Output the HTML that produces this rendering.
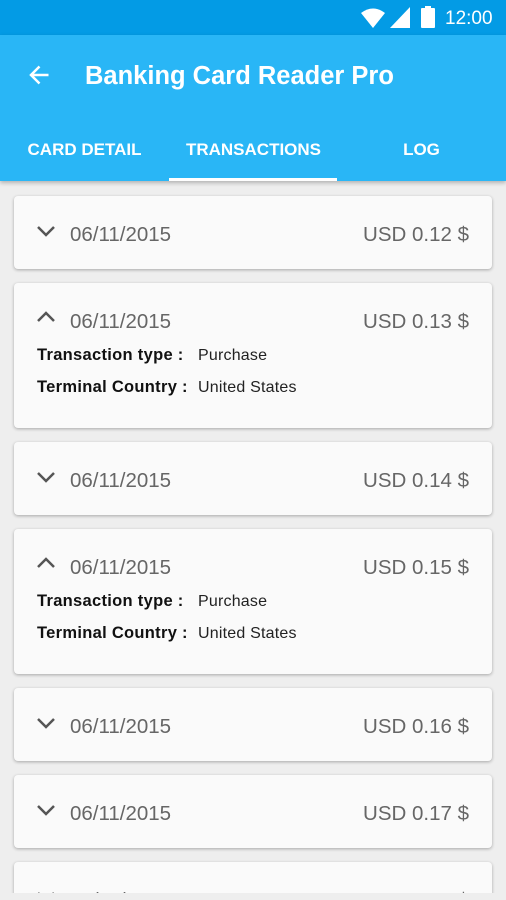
<!DOCTYPE html>
<html><head><style>
*{margin:0;padding:0;box-sizing:border-box}
body{width:506px;height:900px;background:#eeeeee;font-family:"Liberation Sans",sans-serif;position:relative;overflow:hidden}
.sb{position:absolute;top:0;left:0;width:506px;height:35px;background:#039be5}
.ab{position:absolute;top:35px;left:0;width:506px;height:146px;background:#29b6f6;box-shadow:0 2px 4px rgba(0,0,0,.25)}
.t{position:absolute;color:#fff}
.tab{position:absolute;top:138px;font-size:17px;font-weight:bold;color:#fff;text-align:center;width:169px}
.ind{position:absolute;left:169px;top:178px;width:168px;height:3px;background:#fff}
.clip{position:absolute;top:181px;left:0;width:506px;height:712px;overflow:hidden}
.card{position:absolute;left:14px;width:478px;background:#fafafa;border-radius:4px;box-shadow:0 1px 3px rgba(0,0,0,.3)}
.d{position:absolute;left:56px;font-size:20.5px;color:#666;top:27px}
.a{position:absolute;right:23px;font-size:20.5px;color:#666;top:27px}
.ch{position:absolute;left:22px}
.l{position:absolute;left:23px;font-size:16.5px;color:#111;font-weight:bold;letter-spacing:0.3px}
.v{position:absolute;left:184px;font-size:16px;color:#222;letter-spacing:0.2px}
</style></head><body>
<div class="sb">
<svg style="position:absolute;left:360px;top:7px" width="26" height="22" viewBox="0 0 26 22"><path d="M1 6 Q13 -3 25 6 L13 21 Z" fill="#fff"/></svg>
<svg style="position:absolute;left:390px;top:7px" width="20" height="21"><path d="M0 21 L20 0 L20 21 Z" fill="#fff"/></svg>
<svg style="position:absolute;left:421px;top:6px" width="14" height="22"><rect x="4" y="0" width="6" height="3" fill="#fff"/><rect x="0" y="2" width="14" height="20" rx="1" fill="#fff"/></svg>
<div class="t" style="left:445px;top:8px;font-size:19px">12:00</div>
</div>
<div class="ab">
<svg style="position:absolute;left:27px;top:28px" width="25" height="24" viewBox="0 0 24 24"><path d="M21 12H4M12 3.5L3.5 12 12 20.5" stroke="#fff" stroke-width="2.5" fill="none"/></svg>
<div class="t" style="left:85px;top:27px;font-size:25.5px;font-weight:bold">Banking Card Reader Pro</div>
<div class="tab" style="left:0;top:105px">CARD DETAIL</div>
<div class="tab" style="left:169px;top:105px">TRANSACTIONS</div>
<div class="tab" style="left:337px;top:105px">LOG</div>
<div class="ind" style="top:143px"></div>
</div>
<div class="clip">
<div class="card" style="top:15px;height:73px"><svg class="ch" style="top:28px" width="20" height="14"><path d="M2 3 L10 11 L18 3" stroke="#555" stroke-width="2.5" fill="none"/></svg><div class="d">06/11/2015</div><div class="a">USD 0.12 $</div></div>
<div class="card" style="top:102px;height:145px"><svg class="ch" style="top:27px" width="20" height="14"><path d="M2 11 L10 3 L18 11" stroke="#555" stroke-width="2.5" fill="none"/></svg><div class="d">06/11/2015</div><div class="a">USD 0.13 $</div><div class="l" style="top:63px">Transaction type :</div><div class="v" style="top:64px">Purchase</div><div class="l" style="top:95px">Terminal Country :</div><div class="v" style="top:96px">United States</div></div>
<div class="card" style="top:261px;height:73px"><svg class="ch" style="top:28px" width="20" height="14"><path d="M2 3 L10 11 L18 3" stroke="#555" stroke-width="2.5" fill="none"/></svg><div class="d">06/11/2015</div><div class="a">USD 0.14 $</div></div>
<div class="card" style="top:348px;height:145px"><svg class="ch" style="top:27px" width="20" height="14"><path d="M2 11 L10 3 L18 11" stroke="#555" stroke-width="2.5" fill="none"/></svg><div class="d">06/11/2015</div><div class="a">USD 0.15 $</div><div class="l" style="top:63px">Transaction type :</div><div class="v" style="top:64px">Purchase</div><div class="l" style="top:95px">Terminal Country :</div><div class="v" style="top:96px">United States</div></div>
<div class="card" style="top:507px;height:73px"><svg class="ch" style="top:28px" width="20" height="14"><path d="M2 3 L10 11 L18 3" stroke="#555" stroke-width="2.5" fill="none"/></svg><div class="d">06/11/2015</div><div class="a">USD 0.16 $</div></div>
<div class="card" style="top:594px;height:73px"><svg class="ch" style="top:28px" width="20" height="14"><path d="M2 3 L10 11 L18 3" stroke="#555" stroke-width="2.5" fill="none"/></svg><div class="d">06/11/2015</div><div class="a">USD 0.17 $</div></div>
<div class="card" style="top:681px;height:73px"><svg class="ch" style="top:28px" width="20" height="14"><path d="M2 3 L10 11 L18 3" stroke="#555" stroke-width="2.5" fill="none"/></svg><div class="d">06/11/2015</div><div class="a">USD 0.18 $</div></div>
</div>
</body></html>
